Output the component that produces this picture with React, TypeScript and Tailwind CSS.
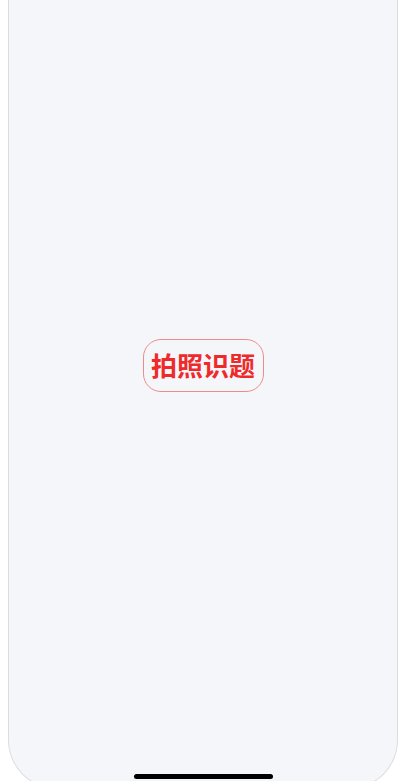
export default function App() {
  return (
    <div className="relative h-[781px] w-full overflow-hidden bg-white">
      <div className="ml-[8px] mr-[5px] flex h-[789px] flex-col items-center justify-center rounded-b-[49px] border-x border-b border-[#dcdde2] bg-[#f5f6fa] pb-[58px]">
        <button
          type="button"
          className="flex h-[53px] w-[121px] items-center justify-center rounded-[18px] border border-[#ee8c8c] text-[26px] font-bold leading-none text-[#ee2b2b]"
          style={{ fontFamily: '"Noto Sans CJK SC", "Noto Sans", sans-serif' }}
        >
          拍照识题
        </button>
      </div>
      <div className="absolute bottom-[2px] left-[134px] h-[5px] w-[139px] rounded-full bg-black" />
    </div>
  );
}
